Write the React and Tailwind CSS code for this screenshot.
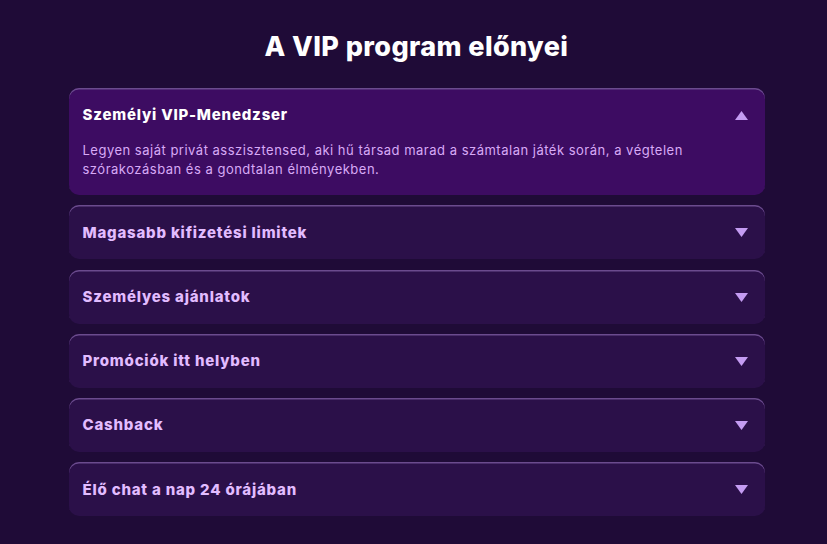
import React, { useState } from 'react';

const items = [
    {
        title: 'Személyi VIP-Menedzser',
        body: 'Legyen saját privát asszisztensed, aki hű társad marad a számtalan játék során, a végtelen szórakozásban és a gondtalan élményekben.',
    },
    { title: 'Magasabb kifizetési limitek', body: '' },
    { title: 'Személyes ajánlatok', body: '' },
    { title: 'Promóciók itt helyben', body: '' },
    { title: 'Cashback', body: '' },
    { title: 'Élő chat a nap 24 órájában', body: '' },
];

function Arrow({ up }) {
    return (
        <svg width="13" height="9" viewBox="0 0 13 9" className={up ? '' : 'rotate-180'}>
            <path d="M6.5 0 L13 9 L0 9 Z" fill="#c49cf2" />
        </svg>
    );
}

export default function App() {
    const [open, setOpen] = useState(0);

    return (
        <div className="min-h-[544px] bg-[#1f0b37] pt-[30px] pb-[28px] pl-[6px] font-['Inter','Noto_Sans',sans-serif]">
            <h2 className="text-center text-[27px] leading-[34px] font-extrabold text-white tracking-[0.4px]">
                A VIP program előnyei
            </h2>

            <div className="mx-auto mt-[24px] w-[696px] flex flex-col gap-[10.25px]">
                {items.map((item, i) => {
                    const isOpen = open === i;
                    return (
                        <div
                            key={item.title}
                            className={`rounded-[10px] shadow-[inset_0_1.5px_0_#6b4b8e] ${isOpen ? 'bg-[#3d0c62]' : 'bg-[#2b1049]'}`}
                        >
                            <button
                                onClick={() => setOpen(isOpen ? -1 : i)}
                                className="w-full h-[54px] flex items-center justify-between pl-[14px] pr-[17px] pt-[1px] text-left"
                            >
                                <span className={`text-[15px] font-extrabold tracking-[0.8px] ${isOpen ? 'text-white' : 'text-[#e2bcff]'}`}>
                                    {item.title}
                                </span>
                                <Arrow up={isOpen} />
                            </button>
                            {isOpen && (
                                <p className="-mt-[1px] px-[14px] pb-[16px] pr-[60px] text-[13px] leading-[19px] tracking-[0.5px] text-[#d8aaf6]">
                                    {item.body}
                                </p>
                            )}
                        </div>
                    );
                })}
            </div>
        </div>
    );
}
